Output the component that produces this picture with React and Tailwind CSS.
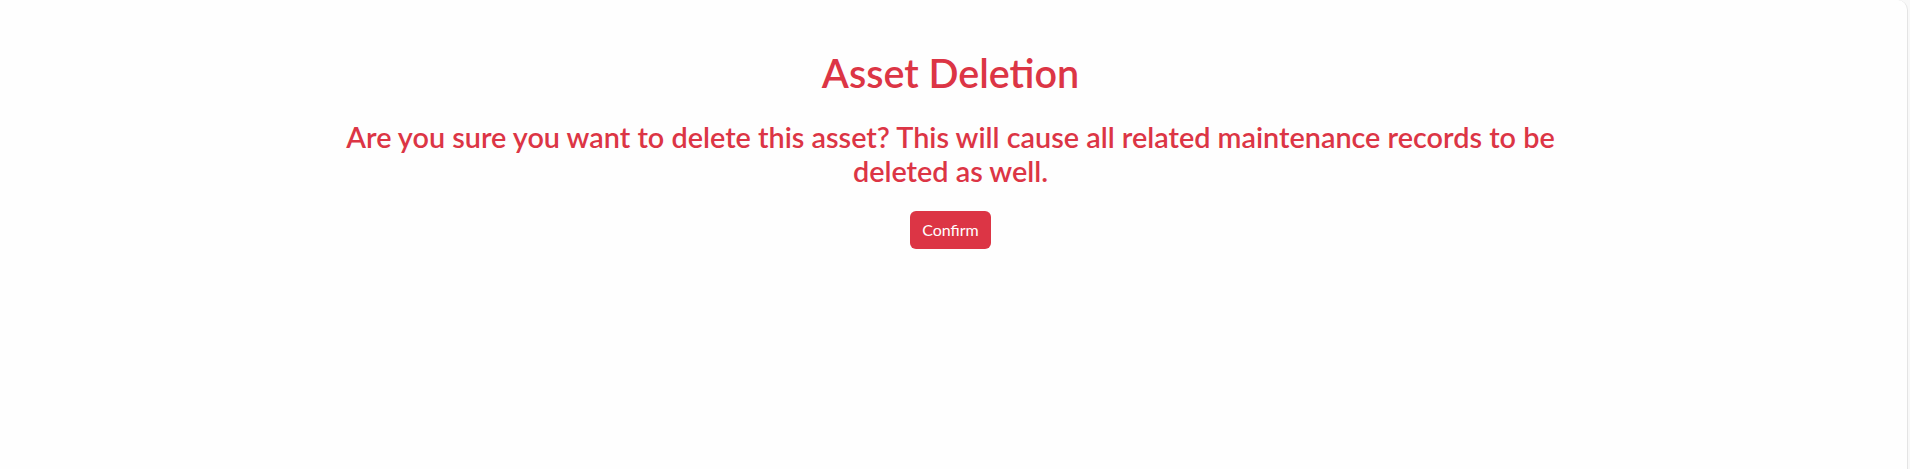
import React from 'react';

export default function App() {
  return (
    <div className="h-[469px] w-full overflow-hidden bg-[#f8f8f8]" style={{ fontFamily: 'Lato, "Noto Sans", sans-serif' }}>
      <div className="h-full w-[1908px] rounded-tr-[10px] border-r border-[#e4e4e4] bg-[#fefefe]">
        <div className="pr-[6px]">
          <div className="mx-auto w-[1290px] pt-[49px] text-center text-[#dc3545]">
            <h1 className="text-[39.5px] font-semibold leading-[48px]">Asset Deletion</h1>
            <h3 className="mt-[23px] text-[28.8px] font-semibold leading-[34px]">
              Are you sure you want to delete this asset? This will cause all related maintenance records to be deleted as well.
            </h3>
            <button className="mt-[23px] h-[38px] w-[81px] rounded-[6px] bg-[#dc3545] text-[16px] leading-6 text-white">
              Confirm
            </button>
          </div>
        </div>
      </div>
    </div>
  );
}
